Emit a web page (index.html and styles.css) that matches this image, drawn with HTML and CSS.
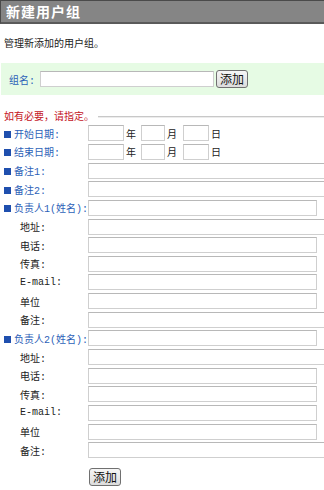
FILE: index.html
```html
<html lang="zh">
<head>
    <meta charset="UTF-8">
    <title>新建用户组</title>
    <link rel="stylesheet" href="styles.css">
</head>
<body>

    <div class="title-bar">新建用户组</div>

    <p class="desc">管理新添加的用户组。</p>

    <div class="group-box">
        <span class="group-label">组名:</span>
        <input type="text" class="group-input">
        <button class="btn">添加</button>
    </div>

    <div class="legend-line">
        <span class="legend">如有必要，请指定。</span>
        <span class="rule"></span>
    </div>

    <div class="form-rows">
        <div class="row">
            <span class="label main"><i class="sq"></i>开始日期:</span>
            <div class="field date">
                <input type="text" class="d-year"><span class="unit">年</span>
                <input type="text" class="d-month"><span class="unit">月</span>
                <input type="text" class="d-day"><span class="unit">日</span>
            </div>
        </div>
        <div class="row">
            <span class="label main"><i class="sq"></i>结束日期:</span>
            <div class="field date">
                <input type="text" class="d-year"><span class="unit">年</span>
                <input type="text" class="d-month"><span class="unit">月</span>
                <input type="text" class="d-day"><span class="unit">日</span>
            </div>
        </div>
        <div class="row">
            <span class="label main"><i class="sq"></i>备注1:</span>
            <div class="field"><input type="text" class="wide"></div>
        </div>
        <div class="row">
            <span class="label main"><i class="sq"></i>备注2:</span>
            <div class="field"><input type="text" class="wide"></div>
        </div>

        <div class="row">
            <span class="label main"><i class="sq"></i>负责人1(姓名):</span>
            <div class="field"><input type="text" class="mid"></div>
        </div>
        <div class="row">
            <span class="label sub">地址:</span>
            <div class="field"><input type="text" class="wide"></div>
        </div>
        <div class="row">
            <span class="label sub">电话:</span>
            <div class="field"><input type="text" class="mid"></div>
        </div>
        <div class="row">
            <span class="label sub">传真:</span>
            <div class="field"><input type="text" class="mid"></div>
        </div>
        <div class="row">
            <span class="label sub">E-mail:</span>
            <div class="field"><input type="text" class="mid"></div>
        </div>
        <div class="row">
            <span class="label sub">单位</span>
            <div class="field"><input type="text" class="mid"></div>
        </div>
        <div class="row">
            <span class="label sub">备注:</span>
            <div class="field"><input type="text" class="wide"></div>
        </div>

        <div class="row">
            <span class="label main"><i class="sq"></i>负责人2(姓名):</span>
            <div class="field"><input type="text" class="mid"></div>
        </div>
        <div class="row">
            <span class="label sub">地址:</span>
            <div class="field"><input type="text" class="wide"></div>
        </div>
        <div class="row">
            <span class="label sub">电话:</span>
            <div class="field"><input type="text" class="mid"></div>
        </div>
        <div class="row">
            <span class="label sub">传真:</span>
            <div class="field"><input type="text" class="mid"></div>
        </div>
        <div class="row">
            <span class="label sub">E-mail:</span>
            <div class="field"><input type="text" class="mid"></div>
        </div>
        <div class="row">
            <span class="label sub">单位</span>
            <div class="field"><input type="text" class="mid"></div>
        </div>
        <div class="row">
            <span class="label sub">备注:</span>
            <div class="field"><input type="text" class="wide"></div>
        </div>
    </div>

    <div class="submit-row">
        <button class="btn">添加</button>
    </div>

</body>
</html>
```

FILE: styles.css
```css
* {
    margin: 0;
    padding: 0;
    box-sizing: border-box;
}

html, body {
    overflow: hidden;
}

body {
    background: #fff;
    color: #222;
    font-family: "Liberation Mono", "Noto Sans CJK SC", monospace;
    font-size: 10px;
    width: 324px;
    height: 490px;
}

/* Title */
.title-bar {
    height: 24px;
    background: #858585;
    border-top: 1px solid #4a4a4a;
    border-left: 1px solid #4a4a4a;
    border-bottom: 2px solid #5a5a5a;
    color: #fff;
    font-family: "Noto Sans CJK SC", sans-serif;
    font-size: 14px;
    font-weight: bold;
    line-height: 20px;
    padding-left: 5px;
    letter-spacing: 1px;
}

.desc {
    margin: 13px 0 0 4px;
    height: 16px;
    line-height: 16px;
}

/* Group name box */
.group-box {
    display: flex;
    align-items: center;
    margin-top: 10px;
    margin-left: 1px;
    height: 32px;
    background: #e6fbe4;
    padding-left: 8px;
}

.group-label {
    color: #2d62b8;
    width: 31px;
    white-space: nowrap;
}

.group-input {
    width: 174px;
    margin-right: 2px;
}

input {
    height: 16px;
    border: 1px solid #cfcfcf;
    border-top-color: #b8b8b8;
    background: #fff;
    outline: none;
    flex-shrink: 0;
}

.btn {
    height: 18px;
    padding: 0 3px;
    font-family: "Noto Sans CJK SC", sans-serif;
    font-size: 12px;
    line-height: 14px;
    color: #111;
    background: linear-gradient(#f6f6f6, #dcdcdc);
    border: 1px solid #707070;
    border-radius: 3px;
}

/* Legend */
.legend-line {
    display: flex;
    align-items: center;
    margin: 12px 0 0 4px;
    height: 16px;
}

.legend {
    color: #c4141e;
    padding-right: 4px;
}

.rule {
    flex-grow: 1;
    height: 2px;
    margin-top: 4px;
    border-top: 1px solid #c8c8c8;
    border-bottom: 1px solid #ececec;
}

/* Form rows */
.form-rows {
    margin-top: 1px;
    padding-left: 4px;
}

.row {
    display: flex;
    align-items: center;
    height: 18.65px;
}

.label {
    width: 84px;
    flex-shrink: 0;
    white-space: nowrap;
}

.label.main {
    color: #2d62b8;
}

.sq {
    display: inline-block;
    width: 7px;
    height: 7px;
    background: #1f4fae;
    margin-right: 3px;
    vertical-align: 0;
}

.label.sub {
    padding-left: 16px;
    color: #222;
}

.field {
    display: flex;
    align-items: center;
}

.unit {
    display: inline-block;
    padding-left: 2px;
}

.d-year { width: 36px; }
.d-year + .unit { width: 17px; }
.d-month { width: 24px; }
.d-month + .unit { width: 18px; }
.d-day { width: 26px; }

.mid { width: 229px; }
.wide { width: 260px; }

.submit-row {
    padding-left: 89px;
    margin-top: 8px;
}
```
